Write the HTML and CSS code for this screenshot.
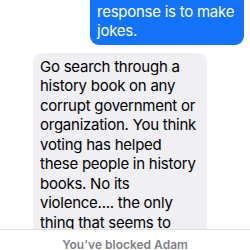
FILE: index.html
```html
<!DOCTYPE html>
<html lang="en">
<head>
    <meta charset="UTF-8">
    <meta name="viewport" content="width=device-width, initial-scale=1.0">
    <title>Messages</title>
    <link rel="stylesheet" href="styles.css">
</head>
<body>
    <div class="screen">
        <div class="thread">
            <div class="thread-scroll">
                <div class="msg msg-out">And the whole response is to make jokes.</div>
                <div class="msg msg-in">Go search through a history book on any corrupt government or organization. You think voting has helped these people in history books. No its violence.... the only thing that seems to</div>
            </div>
        </div>
        <div class="blocked-bar">You've blocked Adam</div>
    </div>
</body>
</html>
```

FILE: styles.css
```css
body {
    margin: 0;
    font-family: 'Inter', 'Liberation Sans', sans-serif;
    background-color: white;
}

.screen {
    height: 250px;
    display: flex;
    flex-direction: column;
    overflow: hidden;
}

.thread {
    height: 229px;
    flex-shrink: 0;
    overflow: hidden;
}

/* thread is scrolled, so the top of the first bubble is off screen */
.thread-scroll {
    display: flex;
    flex-direction: column;
    gap: 8px;
    margin-top: -22px;
}

.msg {
    font-size: 15px;
    line-height: 19.5px;
    letter-spacing: -0.25px;
    padding: 4px 7px;
    border-radius: 9px;
    box-sizing: border-box;
}

.msg-out {
    align-self: flex-end;
    width: 154px;
    margin-right: 6px;
    background-color: #1273f8;
    color: white;
}

.msg-in {
    align-self: flex-start;
    width: 174px;
    margin-left: 33px;
    background-color: #efeff4;
    color: black;
}

.blocked-bar {
    flex-shrink: 0;
    border-top: 1px solid #e2e2e2;
    background-color: white;
    padding-top: 7px;
    text-align: center;
    font-size: 12px;
    font-weight: 600;
    color: #7f7f84;
    height: 40px;
}
```
